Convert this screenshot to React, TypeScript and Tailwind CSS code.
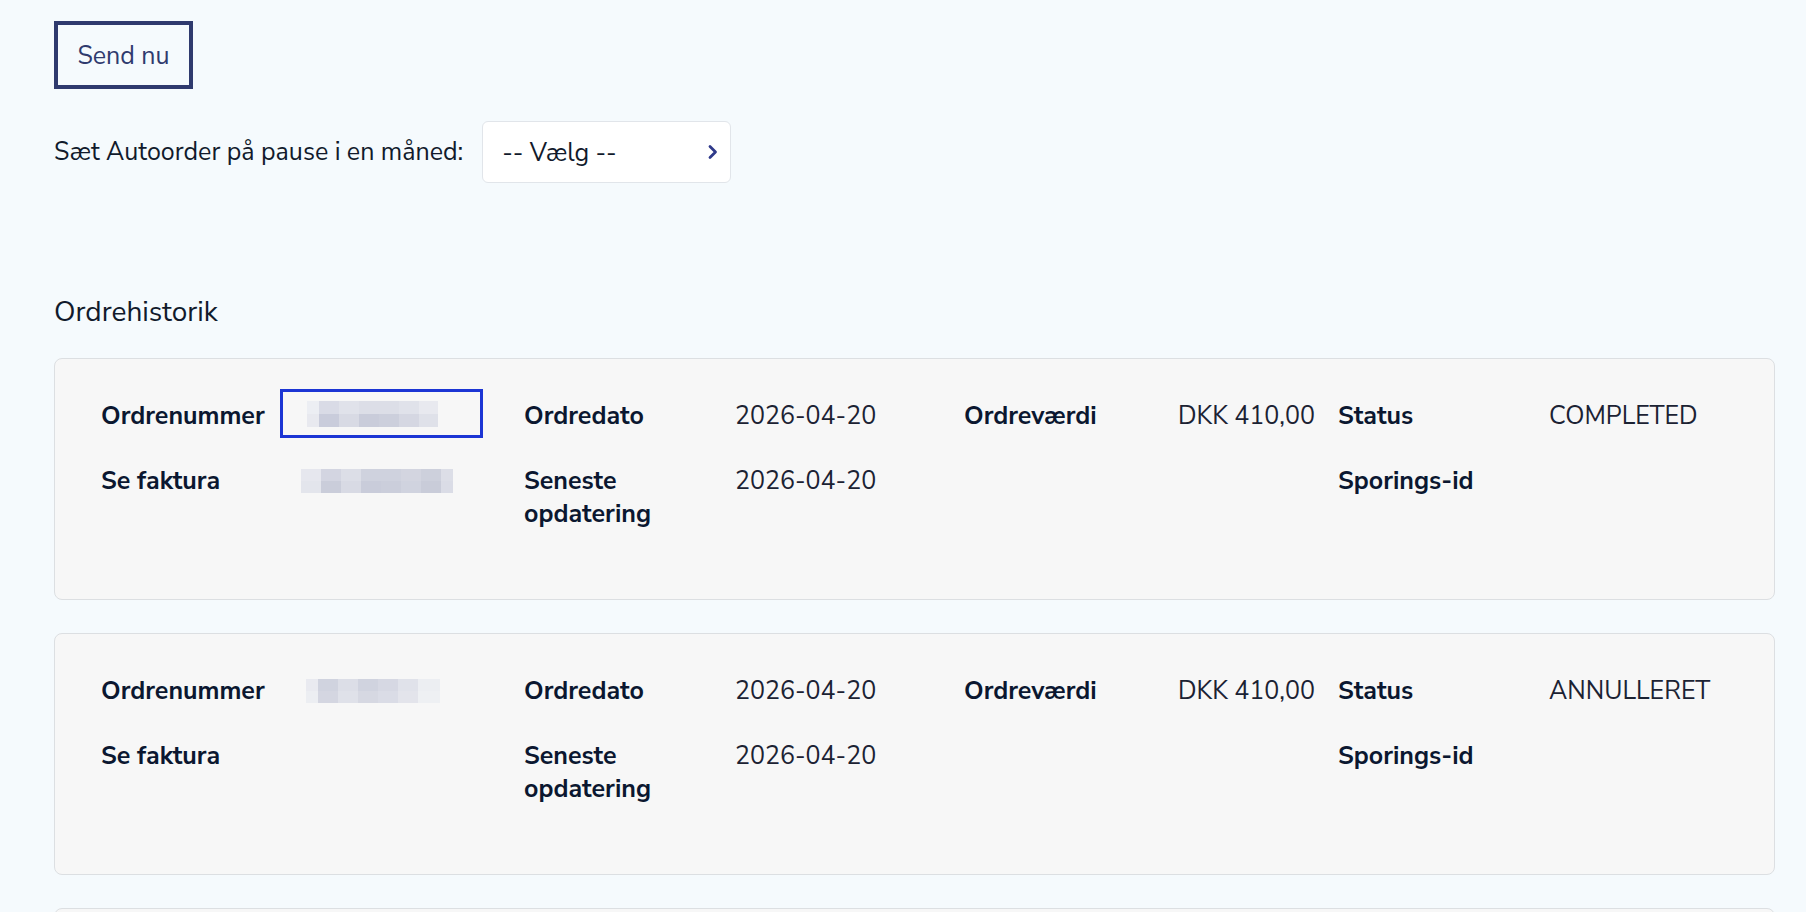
import React from "react";

type Cell = { w: number; c: string };

function Pixels({ rows, h }: { rows: Cell[][]; h: number }) {
  return (
    <div className="flex flex-col">
      {rows.map((r, i) => (
        <div key={i} className="flex">
          {r.map((cell, j) => (
            <div key={j} style={{ width: cell.w, height: h, background: cell.c }} />
          ))}
        </div>
      ))}
    </div>
  );
}

const blockA: Cell[][] = [
  [
    { w: 12, c: "#eceef3" },
    { w: 20, c: "#d9dbe6" },
    { w: 20, c: "#e0e2ea" },
    { w: 20, c: "#dcdee7" },
    { w: 20, c: "#dcdee7" },
    { w: 20, c: "#e0e2ea" },
    { w: 19, c: "#e8e9ef" },
  ],
  [
    { w: 12, c: "#e8e9ef" },
    { w: 20, c: "#c9ccdb" },
    { w: 20, c: "#d8dae4" },
    { w: 20, c: "#c9ccda" },
    { w: 20, c: "#cccfdc" },
    { w: 20, c: "#d5d7e2" },
    { w: 19, c: "#dfe1e9" },
  ],
];

const blockB: Cell[][] = [
  [
    { w: 20, c: "#e6e7ee" },
    { w: 20, c: "#d3d5e1" },
    { w: 20, c: "#dcdee7" },
    { w: 20, c: "#cfd2de" },
    { w: 20, c: "#cfd2de" },
    { w: 20, c: "#d3d5e0" },
    { w: 20, c: "#cdd0dc" },
    { w: 12, c: "#dcdee7" },
  ],
  [
    { w: 20, c: "#e3e5ec" },
    { w: 20, c: "#cacdda" },
    { w: 20, c: "#d8dae4" },
    { w: 20, c: "#c9ccda" },
    { w: 20, c: "#cbcedb" },
    { w: 20, c: "#d0d3df" },
    { w: 20, c: "#c9ccd9" },
    { w: 12, c: "#dadce6" },
  ],
];

const blockC: Cell[][] = [
  [
    { w: 12, c: "#e9eaf0" },
    { w: 20, c: "#d0d3df" },
    { w: 20, c: "#dcdee7" },
    { w: 20, c: "#d0d3df" },
    { w: 20, c: "#d6d8e3" },
    { w: 20, c: "#e0e2ea" },
    { w: 22, c: "#eceef2" },
  ],
  [
    { w: 12, c: "#eceef2" },
    { w: 20, c: "#d4d6e1" },
    { w: 20, c: "#dfe1e9" },
    { w: 20, c: "#d6d8e2" },
    { w: 20, c: "#dadce6" },
    { w: 20, c: "#e3e4eb" },
    { w: 22, c: "#eef0f3" },
  ],
];

function Label({ children, top }: { children: React.ReactNode; top?: boolean }) {
  return <div className={top ? "font-bold text-[#0b1730] pt-[5px]" : "font-bold text-[#0b1730]"}>{children}</div>;
}
function Value({ children, top }: { children: React.ReactNode; top?: boolean }) {
  return <div className={top ? "text-[#1b2233] pt-[5px]" : "text-[#1b2233]"}>{children}</div>;
}

function OrderCard({ status, focused, block, invoice }: { status: string; focused: boolean; block: Cell[][]; invoice: boolean }) {
  return (
    <div className="rounded-[8px] border border-[#dcdfe2] bg-[#f7f7f7] pl-[46px] pt-[30px] pb-[68px]">
      <div className="grid grid-cols-[179px_244px_211px_229px_214px_160px_211px_1fr] items-center h-[49px]">
        <Label top>Ordrenummer</Label>
        <div className="h-[49px] flex items-center">
          {focused ? (
            <div className="w-[203px] h-[49px] border-[3px] border-[#1c35d4] flex items-center pl-[24px]">
              <Pixels rows={block} h={13} />
            </div>
          ) : (
            <div className="pl-[26px] pt-[4px]">
              <Pixels rows={block} h={12} />
            </div>
          )}
        </div>
        <Label top>Ordredato</Label>
        <Value top>2026-04-20</Value>
        <Label top>Ordreværdi</Label>
        <Value top>DKK 410,00</Value>
        <Label top>Status</Label>
        <Value top>{status}</Value>
      </div>
      <div className="grid grid-cols-[179px_244px_211px_229px_214px_160px_211px_1fr] items-start mt-[27px]">
        <Label>Se faktura</Label>
        <div className="pl-[21px] pt-[4px]">{invoice ? <Pixels rows={blockB} h={12} /> : null}</div>
        <Label>
          <span className="block">Seneste</span>
          <span className="block">opdatering</span>
        </Label>
        <Value>2026-04-20</Value>
        <div />
        <div />
        <Label>Sporings-id</Label>
        <div />
      </div>
    </div>
  );
}

export default function App() {
  return (
    <div
      className="min-h-screen bg-[#f5fafd] pl-[54px] pr-[31px] pt-[21px] text-[25px] leading-[33px]"
      style={{ fontFamily: '"Nunito Sans", "Open Sans", "Noto Sans", Arial, sans-serif' }}
    >
      <button className="w-[139px] h-[68px] border-[4px] border-[#2f3a6e] text-[#2f3a6e] text-[25px] flex items-center justify-center pt-[2px] bg-transparent">
        Send nu
      </button>

      <div className="flex items-center mt-[32px] gap-[19px]">
        <span className="text-[#111a2c]">Sæt Autoorder på pause i en måned:</span>
        <div className="w-[249px] h-[62px] bg-white border border-[#e1e5ea] rounded-[6px] flex items-center justify-between pl-[19px] pr-[10px]">
          <span className="text-[#111a2c] text-[25px] pt-[2px]">-- Vælg --</span>
          <svg width="14" height="18" viewBox="0 0 14 18" fill="none">
            <path d="M4 3.5 L9.5 9 L4 14.5" stroke="#2f3a8a" strokeWidth="2.8" strokeLinecap="round" strokeLinejoin="round" />
          </svg>
        </div>
      </div>

      <div className="mt-[110px] text-[28px] leading-[36px] text-[#111a2c] pt-[1px]">Ordrehistorik</div>

      <div className="mt-[28px] flex flex-col gap-[33px]">
        <OrderCard status="COMPLETED" focused block={blockA} invoice />
        <OrderCard status="ANNULLERET" focused={false} block={blockC} invoice={false} />
        <OrderCard status="COMPLETED" focused={false} block={blockC} invoice={false} />
      </div>
    </div>
  );
}
